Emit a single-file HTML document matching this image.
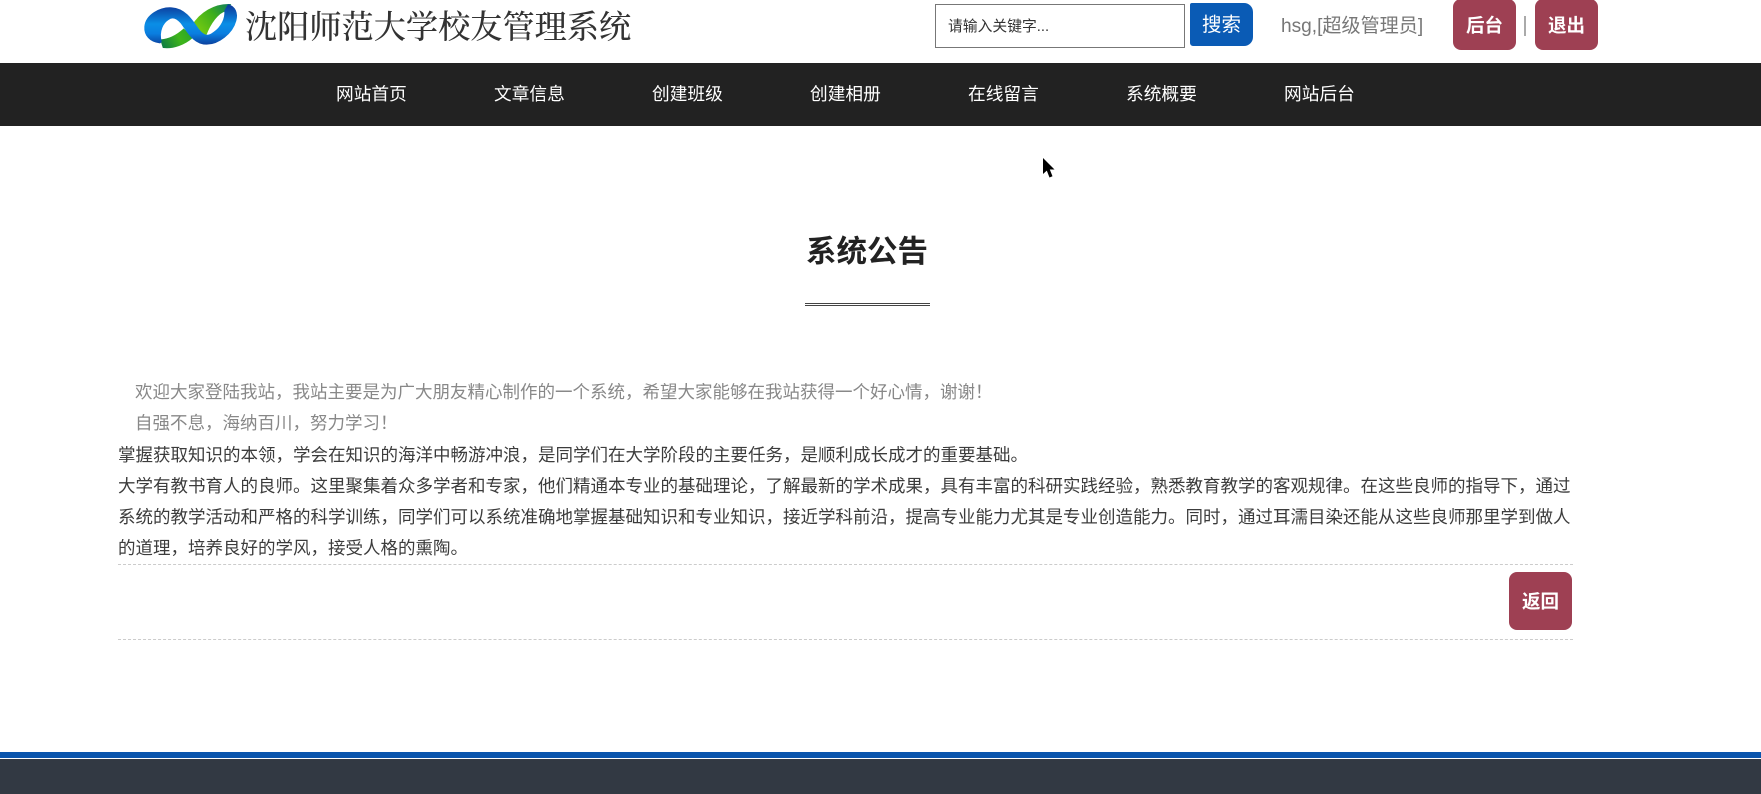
<!DOCTYPE html>
<html lang="zh">
<head>
<meta charset="utf-8">
<title>系统公告</title>
<style>
html,body{margin:0;padding:0;background:#fff;width:1761px;height:794px;overflow:hidden}
body{position:relative;font-family:"Liberation Sans","Noto Sans CJK SC",sans-serif}
.a{position:absolute;white-space:nowrap}
.nav{top:63px;left:0;width:1761px;height:63px;background:#222}
.ni{top:64px;height:61px;line-height:61px;font-size:17.7px;color:#fff}
.btn{background:#9e4053;color:#fff;font-weight:bold;text-align:center;border-radius:8px;font-size:18.5px}
.l{font-size:17.5px;line-height:31px;height:31px;color:#3c3c3c}
.g{color:#888}
.dash{left:118px;width:1455px;height:0;border-top:1px dashed #ccc}
</style>
</head>
<body>
<svg class="a" style="left:135px;top:0" width="115" height="60" viewBox="0 0 345 180">
<defs>
<linearGradient id="b" gradientUnits="userSpaceOnUse" x1="0" y1="20" x2="0" y2="135"><stop offset="0" stop-color="#0c3f9f"/><stop offset=".45" stop-color="#0a8ee6"/><stop offset=".7" stop-color="#0a7fe0"/><stop offset="1" stop-color="#0b3f9c"/></linearGradient>
<linearGradient id="g1" gradientUnits="userSpaceOnUse" x1="80" y1="140" x2="165" y2="90"><stop offset="0" stop-color="#0c7a45"/><stop offset=".6" stop-color="#3fb51a"/><stop offset="1" stop-color="#2aa52a"/></linearGradient>
<linearGradient id="g2" gradientUnits="userSpaceOnUse" x1="180" y1="100" x2="280" y2="15"><stop offset="0" stop-color="#7fd00f"/><stop offset=".6" stop-color="#3cae1c"/><stop offset="1" stop-color="#117f5a"/></linearGradient>
</defs>
<path fill="url(#g1)" stroke="url(#g1)" stroke-width="4" d="M78 120C105 118 128 104 146 88L172 112C150 132 115 146 85 142Z"/>
<path fill="url(#g2)" stroke="url(#g2)" stroke-width="4" d="M172 78C195 38 240 12 285 14L272 32C250 36 225 70 212 106Z"/>
<path fill="url(#b)" stroke="url(#b)" stroke-width="4" d="M75 128C45 125 28 105 30 80C33 45 75 22 110 24C150 26 172 62 190 88C205 108 218 112 236 98C260 82 272 55 270 32L280 15C300 20 308 40 302 62C292 100 250 132 215 132C175 132 158 94 138 68C125 54 112 48 100 58C84 68 70 92 78 125Z"/>
</svg>
<div class="a" style="left:245px;top:3px;height:48px;line-height:48px;font-size:32.2px;font-weight:500;color:#333;font-family:'Liberation Serif','Noto Serif CJK SC',serif">沈阳师范大学校友管理系统</div>

<div class="a" style="left:935px;top:4px;width:248px;height:42px;border:1px solid #777;background:#fff"></div>
<div class="a" style="left:948px;top:5px;height:44px;line-height:44px;font-size:14.8px;color:#333">请输入关键字...</div>
<div class="a" style="left:1190px;top:3px;width:63px;height:43px;line-height:44px;background:#0a5bb5;color:#fff;text-align:center;font-size:19.5px;border-radius:2px 9px 9px 3px">搜索</div>
<div class="a" style="left:1281px;top:5px;height:44px;line-height:44px;font-size:19.1px;color:#777">hsg,[超级管理员]</div>
<div class="a btn" style="left:1453px;top:-1px;width:63px;height:51px;line-height:54px">后台</div>
<div class="a" style="left:1524px;top:16px;width:2px;height:20px;background:#aaa"></div>
<div class="a btn" style="left:1535px;top:-1px;width:63px;height:51px;line-height:54px">退出</div>

<div class="a nav"></div>
<div class="a ni" style="left:336px">网站首页</div>
<div class="a ni" style="left:494px">文章信息</div>
<div class="a ni" style="left:652px">创建班级</div>
<div class="a ni" style="left:810px">创建相册</div>
<div class="a ni" style="left:968px">在线留言</div>
<div class="a ni" style="left:1126px">系统概要</div>
<div class="a ni" style="left:1284px">网站后台</div>

<svg class="a" style="left:1042px;top:158px" width="14" height="21" viewBox="0 0 14 21"><path d="M1 0V16L4.800 12.600L7.500 19.500L10.500 18.200L7.800 11.500H12.500Z" fill="#000"/></svg>

<div class="a" style="left:802px;top:231px;height:42px;line-height:42px;font-size:30.500px;font-weight:bold;color:#222;width:130px;text-align:center">系统公告</div>
<div class="a" style="left:805px;top:303px;width:125px;height:1px;border-top:1px solid #444;border-bottom:1px solid #444;padding-bottom:0"></div>

<div class="a l g" style="left:135px;top:377px">欢迎大家登陆我站，我站主要是为广大朋友精心制作的一个系统，希望大家能够在我站获得一个好心情，谢谢！</div>
<div class="a l g" style="left:135px;top:408px">自强不息，海纳百川，努力学习！</div>
<div class="a l" style="left:118px;top:440px">掌握获取知识的本领，学会在知识的海洋中畅游冲浪，是同学们在大学阶段的主要任务，是顺利成长成才的重要基础。</div>
<div class="a l" style="left:118px;top:471px">大学有教书育人的良师。这里聚集着众多学者和专家，他们精通本专业的基础理论，了解最新的学术成果，具有丰富的科研实践经验，熟悉教育教学的客观规律。在这些良师的指导下，通过</div>
<div class="a l" style="left:118px;top:502px">系统的教学活动和严格的科学训练，同学们可以系统准确地掌握基础知识和专业知识，接近学科前沿，提高专业能力尤其是专业创造能力。同时，通过耳濡目染还能从这些良师那里学到做人</div>
<div class="a l" style="left:118px;top:533px">的道理，培养良好的学风，接受人格的熏陶。</div>

<div class="a dash" style="top:564px"></div>
<div class="a btn" style="left:1509px;top:572px;width:63px;height:58px;line-height:60px">返回</div>
<div class="a dash" style="top:639px"></div>

<div class="a" style="left:0;top:752px;width:1761px;height:6px;background:#0a55ad"></div>
<div class="a" style="left:0;top:759px;width:1761px;height:35px;background:#323943"></div>
</body>
</html>
